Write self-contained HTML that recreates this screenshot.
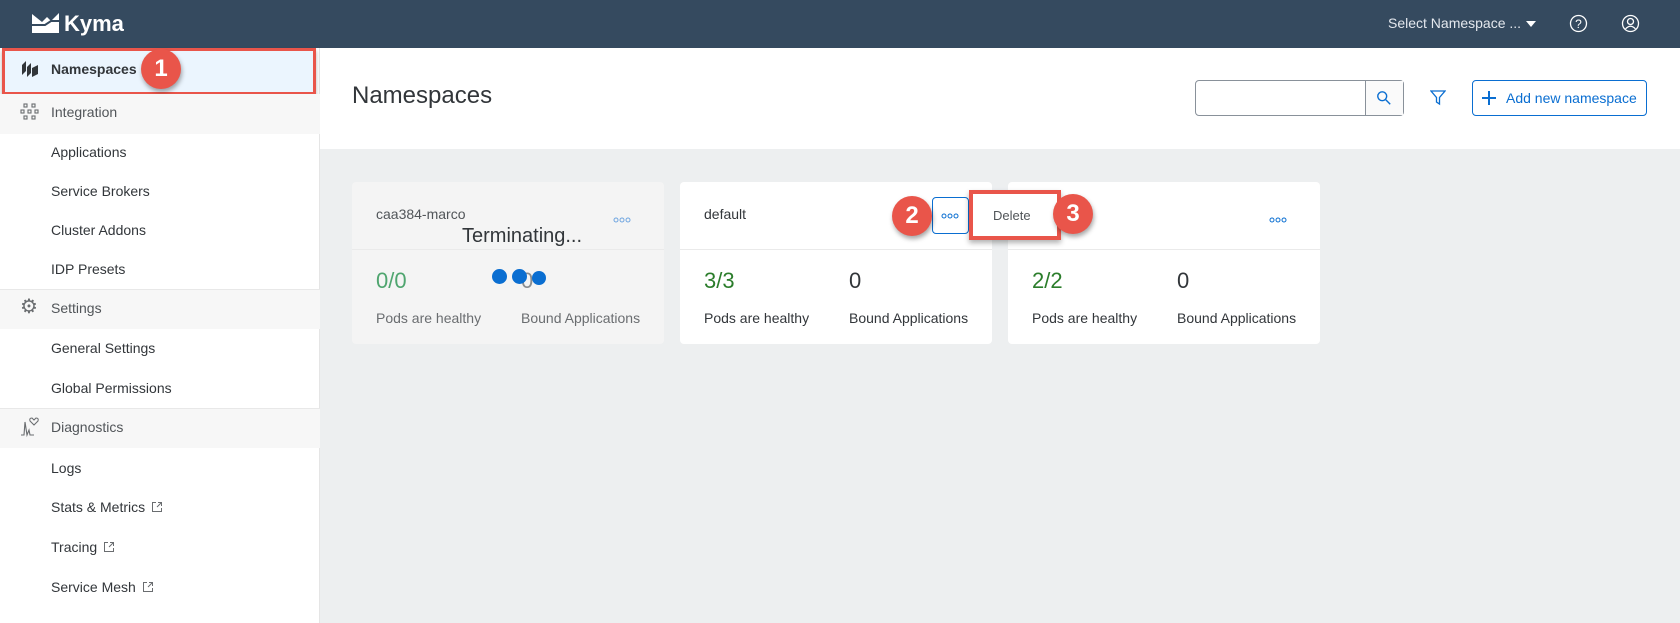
<!DOCTYPE html>
<html><head><meta charset="utf-8"><style>
*{margin:0;padding:0;box-sizing:border-box}
body{width:1680px;height:623px;overflow:hidden;background:#edeff0;font-family:"Liberation Sans",sans-serif;position:relative;color:#32363a}
.a{position:absolute}
.hdr{left:0;top:0;width:1680px;height:48px;background:#354a5f}
.side{left:0;top:48px;width:320px;height:575px;background:#fff;border-right:1px solid #e5e5e5}
.it{position:absolute;left:51px;font-size:14px;color:#32363a;line-height:20px}
.sec{position:absolute;left:0;width:320px;height:40px;background:#f7f7f7;border-top:1px solid #e8e8e8}
.sec span{position:absolute;left:51px;top:10px;font-size:14px;color:#515559}
.card{position:absolute;top:182px;width:312px;height:162px;background:#fff;border-radius:4px}
.card .nm{position:absolute;left:24px;top:24px;font-size:14px;color:#32363a}
.card .ln{position:absolute;left:0;right:0;top:67px;border-top:1px solid #eaeaea}
.card .n1{position:absolute;left:24px;top:86px;font-size:22px;color:#2b7d2b}
.card .n2{position:absolute;left:169px;top:86px;font-size:22px;color:#32363a}
.card .l1{position:absolute;left:24px;top:128px;font-size:14px}
.card .l2{position:absolute;left:169px;top:128px;font-size:14px}
.dots{position:absolute}
.badge{position:absolute;width:40px;height:40px;border-radius:50%;background:#e9554a;color:#fff;font-weight:bold;font-size:24px;text-align:center;line-height:40px;box-shadow:1px 3px 5px rgba(0,0,0,.35)}
.ic{position:absolute;margin-left:6px;margin-top:4px}
</style></head><body>
<div class="a hdr"></div>
<svg class="a" style="left:31px;top:12px" width="30" height="22" viewBox="0 0 30 22"><path d="M1 2 L11 10 L16 5 L20 9 L28 1 V8 H28 V21 H1 Z" fill="#fff"/><path d="M1 13 L14 13 L20 9 L28 9" stroke="#354a5f" stroke-width="2" fill="none"/></svg>
<div class="a" style="left:64px;top:11px;color:#fff;font-weight:bold;font-size:22px">Kyma</div>
<div class="a" style="left:1388px;top:15px;color:#e4e8ee;font-size:14px">Select Namespace ...</div>
<div class="a" style="left:1526px;top:21px;width:0;height:0;border-left:5px solid transparent;border-right:5px solid transparent;border-top:6px solid #fff"></div>
<svg class="a" style="left:1569px;top:14px" width="19" height="19" viewBox="0 0 19 19"><circle cx="9.5" cy="9.5" r="8" fill="none" stroke="#fff" stroke-width="1.3"/><text x="9.5" y="14" fill="#fff" font-size="12" text-anchor="middle" font-family="Liberation Sans">?</text></svg>
<svg class="a" style="left:1621px;top:14px" width="19" height="19" viewBox="0 0 19 19"><circle cx="9.5" cy="9.5" r="8" fill="none" stroke="#fff" stroke-width="1.3"/><circle cx="9.5" cy="7.5" r="3" fill="none" stroke="#fff" stroke-width="1.3"/><path d="M4.5 15 Q9.5 9.5 14.5 15" fill="none" stroke="#fff" stroke-width="1.3"/></svg>

<div class="a side"></div>
<div class="a" style="left:2px;top:48px;width:314px;height:47px;background:#ebf5fe;border:3px solid #e9554a;box-shadow:0 3px 4px rgba(0,0,0,.3)"></div>
<svg class="a" style="left:20px;top:59px" width="20" height="20" viewBox="0 0 20 20"><path d="M2 6 L6 2 L6 12 L2 16Z M7 8 L11 4 L11 14 L7 18Z M12 9 L18 6 L18 15 L12 18Z" fill="#32363a"/></svg>
<div class="it" style="top:59px;font-weight:bold">Namespaces</div>
<div class="badge" style="left:141px;top:49px">1</div>
<div class="sec" style="top:94px;border-top:none"><span>Integration</span></div>
<svg class="a" style="left:20px;top:102px" width="20" height="20" viewBox="0 0 20 20" fill="none" stroke="#6a6d70" stroke-width="1.1"><rect x="4" y="2" width="3" height="3"/><rect x="12" y="2" width="3" height="3"/><rect x="1" y="8" width="3" height="3"/><rect x="8" y="8" width="3" height="3"/><rect x="15" y="8" width="3" height="3"/><rect x="4" y="14" width="3" height="3"/><rect x="12" y="14" width="3" height="3"/></svg>
<div class="it" style="top:142px">Applications</div>
<div class="it" style="top:181px">Service Brokers</div>
<div class="it" style="top:220px">Cluster Addons</div>
<div class="it" style="top:259px">IDP Presets</div>
<div class="sec" style="top:289px"><span>Settings</span></div>
<div class="a" style="left:20px;top:297px;font-size:20px;color:#6a6d70;line-height:20px">⚙</div>
<div class="it" style="top:338px">General Settings</div>
<div class="it" style="top:378px">Global Permissions</div>
<div class="sec" style="top:408px"><span>Diagnostics</span></div>
<svg class="a" style="left:20px;top:416px" width="22" height="22" viewBox="0 0 22 22" fill="none" stroke="#6a6d70" stroke-width="1.1"><path d="M1 19 L4 19 L5 6 L7 19 L9 14 L10 19 L14 19"/><path d="M14 9 L10 5 Q9 2 12 2 L14 4 L16 2 Q19 2 18 5Z"/></svg>
<div class="it" style="top:458px">Logs</div>
<div class="it" style="top:497px">Stats &amp; Metrics<svg class="ic" width="12" height="12" viewBox="0 0 12 12" fill="none" stroke="#6a6d70" stroke-width="1"><path d="M5 1.5H1.5V10.5H10.5V7"/><path d="M6 6L10.5 1.5M7 1.5H10.5V5"/></svg></div>
<div class="it" style="top:537px">Tracing<svg class="ic" width="12" height="12" viewBox="0 0 12 12" fill="none" stroke="#6a6d70" stroke-width="1"><path d="M5 1.5H1.5V10.5H10.5V7"/><path d="M6 6L10.5 1.5M7 1.5H10.5V5"/></svg></div>
<div class="it" style="top:577px">Service Mesh<svg class="ic" width="12" height="12" viewBox="0 0 12 12" fill="none" stroke="#6a6d70" stroke-width="1"><path d="M5 1.5H1.5V10.5H10.5V7"/><path d="M6 6L10.5 1.5M7 1.5H10.5V5"/></svg></div>

<div class="a" style="left:320px;top:48px;width:1360px;height:101px;background:#fff"></div>
<div class="a" style="left:352px;top:82px;font-size:24px;color:#32363a">Namespaces</div>
<div class="a" style="left:1195px;top:80px;width:209px;height:36px;border:1px solid #89919a;border-radius:4px;background:#fff"></div>
<div class="a" style="left:1365px;top:81px;width:38px;height:34px;border-left:1px solid #89919a;background:#fafafa"></div>
<svg class="a" style="left:1376px;top:90px" width="16" height="16" viewBox="0 0 18 18" fill="none" stroke="#0a6ed1" stroke-width="1.6"><circle cx="7" cy="7" r="5"/><path d="M11 11 L16 16"/></svg>
<svg class="a" style="left:1430px;top:89px" width="16" height="17" viewBox="0 0 16 17" fill="none" stroke="#0a6ed1" stroke-width="1.3"><path d="M1 2 H15 L9.5 8.5 V15 L6.5 13 V8.5 Z"/></svg>
<div class="a" style="left:1472px;top:80px;width:175px;height:36px;border:1px solid #0a6ed1;border-radius:4px;background:#fff"></div>
<svg class="a" style="left:1481px;top:90px" width="16" height="16" viewBox="0 0 16 16" stroke="#0a6ed1" stroke-width="2"><path d="M8 1V15M1 8H15"/></svg>
<div class="a" style="left:1506px;top:90px;font-size:14px;color:#0a6ed1">Add new namespace</div>

<div class="card" style="left:352px;background:#f4f4f4">
<div class="nm" style="color:#515559">caa384-marco</div>
<svg class="dots" style="left:261px;top:35px" width="18" height="6" viewBox="0 0 18 6" fill="none" stroke="#6fa5e0" stroke-width="1"><circle cx="3" cy="3" r="2"/><circle cx="9" cy="3" r="2"/><circle cx="15" cy="3" r="2"/></svg>
<div class="ln"></div>
<div class="n1" style="color:#4fa56f">0/0</div><div class="n2" style="color:#8a8d90">0</div>
<div class="l1" style="color:#6a6d70">Pods are healthy</div><div class="l2" style="color:#6a6d70">Bound Applications</div>
<div class="a" style="left:110px;top:43px;font-size:20px;color:#32363a">Terminating...</div>
<div class="a" style="left:140px;top:87px;width:15px;height:15px;border-radius:50%;background:#0a6ed1"></div>
<div class="a" style="left:160px;top:87px;width:15px;height:15px;border-radius:50%;background:#0a6ed1"></div>
<div class="a" style="left:180px;top:89px;width:14px;height:14px;border-radius:50%;background:#0a6ed1"></div>
</div>
<div class="card" style="left:680px">
<div class="nm">default</div>
<div class="ln"></div>
<div class="n1">3/3</div><div class="n2">0</div>
<div class="l1">Pods are healthy</div><div class="l2">Bound Applications</div>
</div>
<div class="a" style="left:932px;top:197px;width:37px;height:37px;border:1px solid #0a6ed1;border-radius:4px;background:#fff"></div>
<svg class="dots" style="left:941px;top:213px" width="18" height="6" viewBox="0 0 18 6" fill="none" stroke="#0a6ed1" stroke-width="1"><circle cx="3" cy="3" r="2"/><circle cx="9" cy="3" r="2"/><circle cx="15" cy="3" r="2"/></svg>
<div class="card" style="left:1008px">
<svg class="dots" style="left:261px;top:35px" width="18" height="6" viewBox="0 0 18 6" fill="none" stroke="#0a6ed1" stroke-width="1"><circle cx="3" cy="3" r="2"/><circle cx="9" cy="3" r="2"/><circle cx="15" cy="3" r="2"/></svg>
<div class="ln"></div>
<div class="n1">2/2</div><div class="n2">0</div>
<div class="l1">Pods are healthy</div><div class="l2">Bound Applications</div>
</div>
<div class="a" style="left:969px;top:190px;width:92px;height:50px;background:#fff;border:4px solid #e9554a;box-shadow:0 3px 5px rgba(0,0,0,.3)"></div>
<div class="a" style="left:993px;top:208px;font-size:13px;color:#515559">Delete</div>
<div class="badge" style="left:892px;top:196px">2</div>
<div class="badge" style="left:1053px;top:194px">3</div>
</body></html>
